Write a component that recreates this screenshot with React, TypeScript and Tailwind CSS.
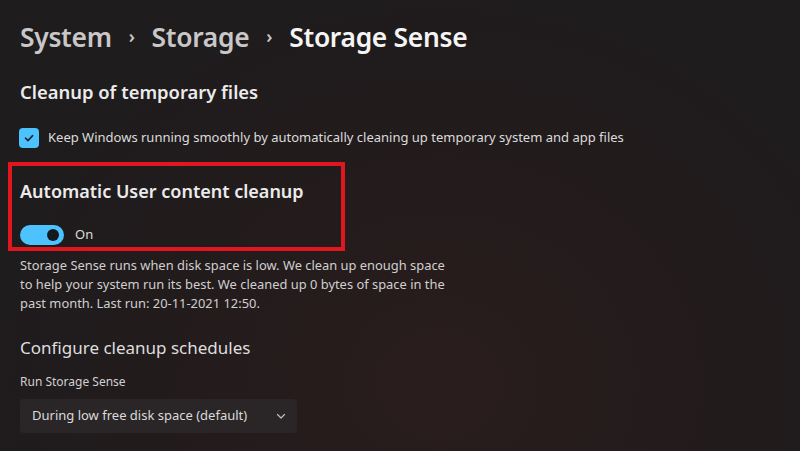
import React from "react";

export default function App() {
  const font = { fontFamily: '"Segoe UI", "Noto Sans", "Open Sans", sans-serif' };
  return (
    <div
      className="w-[800px] h-[451px] overflow-hidden bg-[#1e1b1c] bg-[radial-gradient(ellipse_at_55%_85%,#2a1d1d_0%,#221b1c_45%,#1e1c1d_80%)] text-white pl-[20px]"
      style={font}
    >
      <div className="flex items-center pt-[18px] h-[58px] text-[26.4px] font-semibold tracking-[-0.3px]">
        <span className="text-[#c9c7c8]">System</span>
        <span className="text-[#c9c7c8] text-[18px] mx-[17px] mt-[-4px]">›</span>
        <span className="text-[#c9c7c8]">Storage</span>
        <span className="text-[#c9c7c8] text-[18px] mx-[17px] mt-[-4px]">›</span>
        <span className="text-[#f4f4f4]">Storage Sense</span>
      </div>

      <div className="mt-[22px] text-[18.4px] font-semibold leading-[24px] text-[#ebebeb]">
        Cleanup of temporary files
      </div>

      <div className="mt-[24px] flex items-center h-[20px]">
        <div className="w-[20px] h-[20px] rounded-[4px] bg-[#4cc2ff] flex items-center justify-center ml-[-1px]">
          <svg width="12" height="12" viewBox="0 0 12 12">
            <path d="M2.5 6.2 L5 8.6 L9.6 3.6" fill="none" stroke="#1a2a35" strokeWidth="1.6" strokeLinecap="round" strokeLinejoin="round" />
          </svg>
        </div>
        <span className="ml-[9px] text-[13px] text-[#dcdcdc]">
          Keep Windows running smoothly by automatically cleaning up temporary system and app files
        </span>
      </div>

      <div className="mt-[14px] ml-[-12px] w-[337px] h-[89px] border-4 border-[#e2161f] pl-[8px]">
        <div className="mt-[13px] text-[18px] font-semibold leading-[24px] text-[#ebebeb]">
          Automatic User content cleanup
        </div>
        <div className="mt-[22px] flex items-center">
          <div className="w-[44px] h-[20px] rounded-full bg-[#4cc2ff] flex items-center justify-end pr-[5px]">
            <div className="w-[12px] h-[12px] rounded-full bg-[#151a1f]" />
          </div>
          <span className="ml-[11px] text-[13px] text-[#dcdcdc]">On</span>
        </div>
      </div>

      <div className="mt-[5px] w-[438px] text-[12.9px] leading-[19px] text-[#cfcfcf]">
        Storage Sense runs when disk space is low. We clean up enough space to help your system run its best. We cleaned up 0 bytes of space in the past month. Last run: 20-11-2021 12:50.
      </div>

      <div className="mt-[23px] text-[17px] leading-[24px] text-[#dedede]">
        Configure cleanup schedules
      </div>

      <div className="mt-[14px] text-[12px] leading-[16px] text-[#d0d0d0]">Run Storage Sense</div>

      <div className="mt-[9px] w-[277px] h-[34px] rounded-[4px] bg-[#2a2627] flex items-center justify-between pl-[12px] pr-[10px]">
        <span className="text-[13px] text-[#dadada]">During low free disk space (default)</span>
        <svg width="12" height="12" viewBox="0 0 12 12">
          <path d="M2.5 4.5 L6 8 L9.5 4.5" fill="none" stroke="#bdbdbd" strokeWidth="1.2" strokeLinecap="round" strokeLinejoin="round" />
        </svg>
      </div>
    </div>
  );
}
